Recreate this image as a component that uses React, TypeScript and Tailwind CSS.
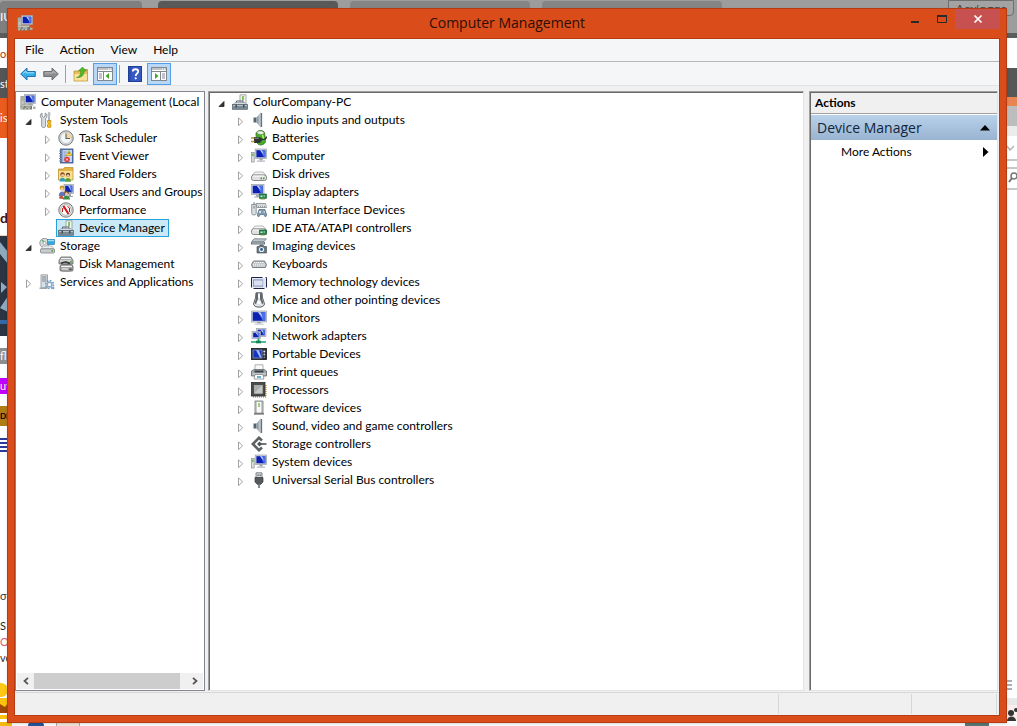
import React, { useState } from 'react';

type TreeNode = {
  id: string;
  label: string;
  icon: React.ReactNode;
  children?: TreeNode[];
  expandable?: boolean;
};

const Svg: React.FC<{ children: React.ReactNode }> = ({ children }) => (
  <svg viewBox="0 0 16 16" className="w-4 h-4 shrink-0" aria-hidden="true">{children}</svg>
);

const Screen = ({ x, y, w, h }: { x: number; y: number; w: number; h: number }) => (
  <g>
    <rect x={x} y={y} width={w} height={h} fill="#d3d7dc" stroke="#9aa0a8" strokeWidth=".7" />
    <rect x={x + 1.2} y={y + 1.2} width={w - 2.4} height={h - 2.4} fill="#0c20b4" />
    <path d={`M${x + w * 0.45} ${y + 1.2}H${x + w - 1.2}V${y + h - 1.2}H${x + w * 0.75}Z`} fill="#4a6fe6" />
    <path d={`M${x + w * 0.42} ${y + 1.2}H${x + w * 0.6}L${x + w * 0.75} ${y + h * 0.6}Z`} fill="#c6d6fb" />
  </g>
);

const ManagementIcon = () => (
  <Svg>
    <path d="M.8 2.500h3.500v9H.8z" fill="#c3c7bd" stroke="#7d8277" strokeWidth=".6" />
    <path d="M1.500 4h2M1.500 6h2" stroke="#777c70" strokeWidth=".7" />
    <Screen x={4.5} y={0.5} w={11} h={9} />
    <path d="M8.500 9.500h3v1.500h-3z" fill="#8b929b" />
    <path d="M.5 12l1.500-1.500h11L12 12z" fill="#d9dbd4" stroke="#83887d" strokeWidth=".5" />
    <rect x=".5" y="12" width="11.500" height="3.500" fill="#777d72" />
    <path d="M1 13h3M5.500 13h5M1 14.700h2M4.500 14.700h2M8 14.700h2" stroke="#e6e8df" strokeWidth=".8" />
    <path d="M13 12.500h2.500v2.500H13z" fill="#a9ada3" />
  </Svg>
);

const ToolsIcon = () => (
  <Svg>
    <path d="M2 1v3l1.600 1.300L5.200 4V1c2 1 2.400 4 .4 5.600V14c0 2-3.900 2-3.900 0V6.600C-.3 5 0 2 2 1z" transform="translate(1)" fill="#d9dce0" stroke="#777d85" strokeWidth=".8" />
    <path d="M9.300.7h1.500v3l-.5 1v4H9.700v-4l-.4-1z" fill="#eceef1" stroke="#888e95" strokeWidth=".7" />
    <path d="M8.500 8.500h3.400v2l-.7 1 .7 1V15c-.6 1-2.800 1-3.400 0v-2.500l.7-1-.7-1z" fill="#f4bb19" stroke="#a87607" strokeWidth=".6" />
  </Svg>
);

const ClockIcon = () => (
  <Svg>
    <circle cx="8" cy="8" r="7.200" fill="#dcdfe2" stroke="#777" strokeWidth="1" />
    <circle cx="8" cy="8" r="5.500" fill="#f1f6f8" stroke="#b0b5b9" strokeWidth=".6" />
    <path d="M8 2.700a5.300 5.300 0 0 1 5.200 5.800H8z" fill="#f6d79a" />
    <path d="M8 3.500V8.500h4" fill="none" stroke="#54626e" strokeWidth="1.100" />
  </Svg>
);

const EventIcon = () => (
  <Svg>
    <rect x="2.500" y="1" width="12.500" height="14" fill="#5b7fbd" stroke="#324f86" strokeWidth=".8" />
    <rect x="4.500" y="2" width="9.500" height="12" fill="#c6d7f0" />
    <path d="M5.500 4h3M5.500 6h2M5.500 8h3M5.500 10h1.500M5.500 12h2" stroke="#6782b1" strokeWidth=".8" />
    <path d="M1 3h3M1 5.500h3M1 8h3M1 10.500h3M1 13h3" stroke="#8a8f98" strokeWidth="1" />
    <path d="M11 2.500l3 5H8z" fill="#ffdb34" stroke="#a98400" strokeWidth=".5" />
    <path d="M11 4v2" stroke="#333" strokeWidth=".8" />
    <circle cx="9" cy="11.500" r="2.800" fill="#dd3535" />
    <path d="M7.900 10.400l2.200 2.200m0-2.200l-2.200 2.200" stroke="#fff" strokeWidth=".8" />
  </Svg>
);

const SharedIcon = () => (
  <Svg>
    <path d="M.5 3h5l1-1.500h8.500V14H.5z" fill="#e3b348" stroke="#b48925" strokeWidth=".7" />
    <path d="M1 5h13.500v8.500H1z" fill="#fae093" />
    <circle cx="4.500" cy="8.500" r="2.200" fill="#8e4a21" />
    <circle cx="4.700" cy="9.300" r="1.400" fill="#f2c69a" />
    <path d="M1.500 15.500c0-5 6-5 6 0z" fill="#2f9dbb" />
    <circle cx="10" cy="8.800" r="2.100" fill="#5c371c" />
    <circle cx="10" cy="9.600" r="1.400" fill="#f3c9a0" />
    <path d="M7 15.800c0-5 6-5 6 0z" fill="#5a9b38" />
  </Svg>
);

const UsersIcon = () => (
  <Svg>
    <Screen x={6} y={0.5} w={9.5} h={9} />
    <path d="M11 10h2v2h2v1h-5z" fill="#9fa5af" />
    <circle cx="4" cy="4" r="2.400" fill="#c9952a" />
    <circle cx="4" cy="5" r="1.500" fill="#f5cda4" />
    <path d="M.8 12c0-6 6.400-6 6.400 0z" fill="#6473bd" />
    <circle cx="8.500" cy="9" r="2.300" fill="#71421f" />
    <circle cx="8.500" cy="9.800" r="1.500" fill="#f4cba1" />
    <path d="M5 15.500c0-5.500 7-5.500 7 0z" fill="#398d48" />
    <path d="M1 14.500c0-4 4.500-4 4.500.5z" fill="#c2503a" />
  </Svg>
);

const PerformanceIcon = () => (
  <Svg>
    <circle cx="8" cy="8" r="7.200" fill="#e4e4e4" stroke="#777" />
    <circle cx="8" cy="8" r="5.300" fill="#fff" stroke="#999" strokeWidth=".7" />
    <path d="M4.500 10V6.500L7 5M9.500 4.500l2 1.500v4" fill="none" stroke="#b61515" strokeWidth="1" />
    <path d="M5.500 4l5 8" stroke="#d91414" strokeWidth="2" />
  </Svg>
);

const DeviceManagerIcon = () => (
  <Svg>
    <path d="M8 .8h6v9H8z" fill="#f4f5f3" stroke="#91958e" strokeWidth=".8" />
    <path d="M10.200 2h1.600v4.500h-1.600z" fill="#65b83a" />
    <path d="M4.500 9V7H11v2" fill="none" stroke="#566370" />
    <path d="M1 10.500L3 8.500h10l2 2z" fill="#d6dde2" stroke="#7f8b95" strokeWidth=".6" />
    <rect x=".5" y="10.500" width="15" height="4.800" fill="#7c8a96" stroke="#566370" strokeWidth=".7" />
    <path d="M1 11.500h14" stroke="#c3cfd7" strokeWidth=".8" />
    <path d="M3.500 10.500h1.500v3H3.500zM11 10.500h1.500v3H11z" fill="#3f4c57" />
  </Svg>
);

const StorageIcon = () => (
  <Svg>
    <circle cx="5.500" cy="5" r="4.700" fill="#d9dbdd" stroke="#84888c" strokeWidth=".8" />
    <circle cx="5.500" cy="5" r="1.500" fill="#fff" stroke="#888" strokeWidth=".6" />
    <path d="M3 2l2 2" stroke="#52b56a" strokeWidth="1.500" />
    <rect x="8.500" y="1.500" width="7" height="5" fill="#36a8db" stroke="#23769f" strokeWidth=".6" />
    <path d="M9 2.700h6" stroke="#b6eafd" />
    <path d="M2 11l2-3h9l2 3z" fill="#eceeee" stroke="#999d9f" strokeWidth=".6" />
    <rect x="1.500" y="10.800" width="14" height="4.200" rx="1" fill="#c9cccd" stroke="#7f8486" strokeWidth=".8" />
    <path d="M12.500 12h1.500v1.800h-1.500z" fill="#46aa2b" />
  </Svg>
);

const DiskMgmtIcon = () => (
  <Svg>
    <path d="M1 4.500L3 1h10l2 3.500v3.500H1z" fill="#b0b2b1" stroke="#666" strokeWidth=".8" />
    <path d="M3 2.500h10M2 5h11" stroke="#eee" strokeWidth="1" />
    <path d="M3 7.500c4-2.500 6-1.500 9 0" fill="none" stroke="#2f3131" strokeWidth="1.500" />
    <path d="M2 10l2-1.500h9L15 10v4.500c0 1-13 1-13 0z" fill="#a6a8a6" stroke="#5e6060" strokeWidth=".8" />
    <path d="M3 10.500h11M4 13h6" stroke="#f3f3f3" />
    <path d="M12 5h1.800v1.500H12z" fill="#49b32a" />
    <path d="M11.500 12.500h2V14h-2z" fill="#444" />
  </Svg>
);

const ServicesIcon = () => (
  <Svg>
    <path d="M2 .8h6.500v13H2z" fill="#dbe0e3" stroke="#8b969d" strokeWidth=".8" />
    <path d="M3 3h4.500M3 5h4.500M3 7h4.500" stroke="#768188" />
    <path d="M.5 13.500h7.500V15H.5z" fill="#9ba6ad" />
    <circle cx="10.500" cy="10.500" r="4" fill="none" stroke="#7196bb" strokeWidth="1.500" strokeDasharray="1.700 1.400" />
    <circle cx="10.500" cy="10.500" r="2.400" fill="#fff" stroke="#8dafce" strokeWidth="1.700" />
    <circle cx="14.300" cy="14" r="1.200" fill="#7ba0c2" />
  </Svg>
);

const SpeakerIcon = () => (
  <Svg>
    <path d="M2.500 5.500h3v5h-3z" fill="#56646f" />
    <path d="M5.500 5.500l4.500-5v15l-4.500-5z" fill="#8e9aa4" />
    <path d="M7.500 3.300L10 .5v15l-2.500-2.800z" fill="#b9c3ca" />
    <path d="M10.500 1v14" stroke="#66727c" strokeWidth="1.300" />
  </Svg>
);

const BatteryIcon = () => (
  <Svg>
    <path d="M6 2c1-2 6-2 7.500.5l1 8c.5 4-6 6-8 3L5 5c0-2 0-2.500 1-3z" fill="#49ad28" stroke="#2b7816" strokeWidth=".8" />
    <path d="M6 2.500c0-2 6.500-2 7 .5 0 2-6.500 2-7-.5z" fill="#eef3ea" stroke="#777" strokeWidth=".5" />
    <path d="M11.500 5l1.500 5" stroke="#b6f17c" strokeWidth="1.500" />
    <path d="M3 7h4c3 0 4 1 4 2.500S10 13 7 13H3z" fill="#2c3432" />
    <path d="M4 8.200h4" stroke="#8d9895" />
    <path d="M0 8h3.500M0 11.500h3.500" stroke="#bb9032" strokeWidth="1.300" />
    <path d="M11 9.500c3 0 4.500-1 4.500-3" fill="none" stroke="#303030" strokeWidth="1.300" />
  </Svg>
);

const ComputerIcon = () => (
  <Svg>
    <rect x=".5" y="4.500" width="2.700" height="9.500" fill="#dadddf" stroke="#8b9094" strokeWidth=".7" />
    <path d="M1.200 5.500h1.400v2.500H1.200z" fill="#4eb934" />
    <Screen x={4.2} y={1} w={11.4} h={9.5} />
    <path d="M8.500 10.500h3v2h-3z" fill="#9ca3ab" />
    <path d="M6 12.500h8v1.300H6z" fill="#b5bbc2" />
  </Svg>
);

const DriveShape = () => (
  <g>
    <path d="M1.500 9L4 6h8l2.500 3z" fill="#f4f5f5" stroke="#9b9e9f" strokeWidth=".7" />
    <rect x=".5" y="9" width="15" height="5.500" rx="2" fill="#dfe1e1" stroke="#7b7f80" strokeWidth=".9" />
    <path d="M2 10h11" stroke="#fff" />
  </g>
);

const DiskIcon = () => (
  <Svg>
    <DriveShape />
    <path d="M12 11.500h1.500v1.700H12z" fill="#34a61f" />
    <path d="M9.500 11.500h1.500v1.700H9.500z" fill="#707576" />
  </Svg>
);

const Card = () => (
  <g>
    <rect x="8.500" y="10" width="7" height="4.500" fill="#25884a" stroke="#115c2c" strokeWidth=".6" />
    <path d="M9.500 11.500h2v1.500h-2zM12.500 11.500h1.500v1h-1.500z" fill="#cfe9d5" />
    <path d="M9.500 15h4.500" stroke="#8b9a50" strokeWidth="1" />
  </g>
);

const DisplayIcon = () => (
  <Svg>
    <Screen x={0.5} y={0.5} w={12.5} h={10} />
    <path d="M5 10.500h3v2H5zM3 12.500h5v1H3z" fill="#a9afb6" />
    <Card />
  </Svg>
);

const HidIcon = () => (
  <Svg>
    <path d="M.7 2.500h4.500v9c0 2-4.500 2-4.500 0z" fill="#d8dde0" stroke="#788188" strokeWidth=".8" />
    <path d="M3 0v3M3 4v2.500" stroke="#788188" />
    <path d="M5 1.500h9.500l1 4H6z" fill="#eceeef" stroke="#70787d" strokeWidth=".7" />
    <path d="M6.500 3h8M7 4.500h7" stroke="#757d81" strokeWidth=".8" strokeDasharray="1 1" />
    <path d="M8 7.500h6l1.700 5.500-1.200 2-2-2.500h-3L7.500 15l-1.200-2z" fill="#7e9bb1" stroke="#50697c" strokeWidth=".7" />
    <path d="M8 10h2M9 9v2M12.500 10h1.500" stroke="#fff" strokeWidth=".9" />
  </Svg>
);

const IdeIcon = () => (
  <Svg>
    <DriveShape />
    <Card />
  </Svg>
);

const ImagingIcon = () => (
  <Svg>
    <path d="M3 .8h12.500L13 3.500H.8z" fill="#bac7cd" stroke="#667179" strokeWidth=".7" />
    <path d="M0 4h14v2.500H0z" fill="#68757d" />
    <path d="M1 5h12" stroke="#d0d9dd" strokeWidth=".8" />
    <path d="M6 8.500h2L9 7h3l1 1.500h2.500V15H6z" fill="#697680" stroke="#3c4850" strokeWidth=".6" />
    <circle cx="10.500" cy="11.500" r="2.600" fill="#edf2f4" />
    <circle cx="10.500" cy="11.500" r="1.400" fill="#285d91" />
  </Svg>
);

const KeyboardIcon = () => (
  <Svg>
    <path d="M2.500 5h11l2 3.500-1 3h-13l-1-3z" fill="#b6bcbf" stroke="#6d7478" strokeWidth=".9" />
    <path d="M3 6.500h10M2 8.200h12M2 10h12" stroke="#fff" strokeWidth="1" strokeDasharray="1.200 .7" />
  </Svg>
);

const MemoryIcon = () => (
  <Svg>
    <rect x=".5" y="3.500" width="15" height="11" fill="#fff" stroke="#202346" strokeDasharray="11 3" />
    <rect x="1.500" y="4.500" width="13" height="9" fill="#c4cce4" />
    <rect x="2.500" y="6" width="9.500" height="6" fill="#dae2f2" stroke="#828fb4" strokeWidth=".8" />
    <path d="M13 5v8" stroke="#fff" />
  </Svg>
);

const MouseIcon = () => (
  <Svg>
    <path d="M5 .8h6l.5 5 2 6c0 4.500-11 4.500-11 0l2-6z" fill="#dfe3e5" stroke="#4b5054" strokeWidth=".9" />
    <path d="M5 1h2v6l-2 5-1.500-.5 1.500-5zM11 1H9v6l2 5 1.500-.5-1.500-5z" fill="#60676c" />
    <path d="M7.300 2h1.500v4H7.300z" fill="#fff" />
    <circle cx="8" cy="10.500" r="1.800" fill="#fff" />
  </Svg>
);

const MonitorIcon = () => (
  <Svg>
    <Screen x={0.5} y={1} w={15} h={11} />
    <path d="M6 12h4v1.500H6z" fill="#9ca3ab" />
    <path d="M3.500 13.500h9v1.200h-9z" fill="#c4cad1" />
  </Svg>
);

const NetworkIcon = () => (
  <Svg>
    <Screen x={5.5} y={0.5} w={9.5} h={8} />
    <Screen x={1} y={3.5} w={8.5} h={7} />
    <path d="M7.500 10.500v3" stroke="#1e9b68" strokeWidth="1.800" />
    <path d="M0 14h15" stroke="#55bc91" strokeWidth="2" />
    <path d="M5 12.700h5v2.600H5z" fill="#148653" />
  </Svg>
);

const PortableIcon = () => (
  <Svg>
    <rect x=".5" y="2.500" width="15" height="11" fill="#292e37" stroke="#14171c" strokeWidth=".8" />
    <rect x="2" y="4" width="9" height="8" fill="#1431c0" stroke="#9fb1e8" strokeWidth=".6" />
    <path d="M5 4.300h3l2.500 7.400H9z" fill="#9db9fa" />
    <circle cx="13.300" cy="5.500" r="1" fill="#eee" />
    <circle cx="13.300" cy="8.500" r="1" fill="#bbb" />
    <circle cx="13.300" cy="11.300" r=".8" fill="#999" />
  </Svg>
);

const PrinterIcon = () => (
  <Svg>
    <path d="M4 .8h8v6H4z" fill="#fafafa" stroke="#8d9294" strokeWidth=".7" />
    <path d="M.5 7L3 5.500h10L15.500 7v5H.5z" fill="#a4abaf" stroke="#60676b" strokeWidth=".8" />
    <path d="M3.500 7.500h9" stroke="#393f43" strokeWidth="2" />
    <path d="M1.500 10h13" stroke="#dfe3e5" />
    <path d="M4 10.500h8l1 4.500H3z" fill="#fff" stroke="#777e83" strokeWidth=".7" />
    <path d="M6 13h4" stroke="#3c96c8" strokeWidth="1.500" />
  </Svg>
);

const ProcessorIcon = () => (
  <Svg>
    <path d="M2 15h13V2" fill="none" stroke="#cda44d" strokeWidth="1.500" strokeDasharray="1 1" />
    <rect x=".5" y=".5" width="13.500" height="13.500" fill="#4b4d4b" stroke="#2b2c2b" strokeWidth=".8" />
    <rect x="3" y="3" width="8.500" height="8.500" fill="#a9adab" />
    <path d="M3 11.500L11.500 3v8.500z" fill="#c5c8c6" />
  </Svg>
);

const SoftwareIcon = () => (
  <Svg>
    <path d="M4 1h8v12H4z" fill="#c9cccb" stroke="#737776" strokeWidth=".8" />
    <path d="M6 2h4v10.500H6z" fill="#f8f8f8" />
    <path d="M7.300 3h1.500v4H7.300z" fill="#83c250" />
    <path d="M3 13h10v1.700H3z" fill="#7c807e" />
  </Svg>
);

const StorageCtrlIcon = () => (
  <Svg>
    <path d="M11 4.500L8 1.800 1.800 8 8 14.200l3-2.700" fill="none" stroke="#5c6062" strokeWidth="2.600" />
    <path d="M9 8h6.500" stroke="#46494b" strokeWidth="1.500" />
    <path d="M8.500 5.500L11 8l-2.500 2.500L6 8z" fill="#505456" />
  </Svg>
);

const UsbIcon = () => (
  <Svg>
    <path d="M5 .8h6V6H5z" fill="#d5d7d8" stroke="#6c6f71" strokeWidth=".8" />
    <path d="M6.500 2.500h1v1.500h-1zM8.700 2.500h1v1.500h-1z" fill="#484b4d" />
    <path d="M4 5.500h8v4.500l-2.500 2.500h-3L4 10z" fill="#56595c" stroke="#393b3e" strokeWidth=".7" />
    <path d="M8 12v4" stroke="#777a7c" strokeWidth="1.800" />
  </Svg>
);

const Chevron: React.FC<{ open: boolean }> = ({ open }) => (
  <svg viewBox="0 0 9 9" className="w-[9px] h-[9px]" aria-hidden="true">
    {open ? <path d="M7 2.500V7.500H2z" fill="#333" stroke="#222" strokeWidth=".8" /> : <path d="M2.500 .8l4 4-4 4z" fill="#fff" stroke="#a2a2a2" />}
  </svg>
);

const consoleTree: TreeNode[] = [
  {
    id: 'tools', label: 'System Tools', icon: <ToolsIcon />, children: [
      { id: 'tasks', label: 'Task Scheduler', icon: <ClockIcon />, expandable: true },
      { id: 'events', label: 'Event Viewer', icon: <EventIcon />, expandable: true },
      { id: 'shared', label: 'Shared Folders', icon: <SharedIcon />, expandable: true },
      { id: 'users', label: 'Local Users and Groups', icon: <UsersIcon />, expandable: true },
      { id: 'perf', label: 'Performance', icon: <PerformanceIcon />, expandable: true },
      { id: 'devmgr', label: 'Device Manager', icon: <DeviceManagerIcon /> },
    ],
  },
  {
    id: 'storage', label: 'Storage', icon: <StorageIcon />, children: [
      { id: 'diskmgmt', label: 'Disk Management', icon: <DiskMgmtIcon /> },
    ],
  },
  { id: 'services', label: 'Services and Applications', icon: <ServicesIcon />, expandable: true },
];

const devices: [string, React.ReactNode][] = [
  ['Audio inputs and outputs', <SpeakerIcon />],
  ['Batteries', <BatteryIcon />],
  ['Computer', <ComputerIcon />],
  ['Disk drives', <DiskIcon />],
  ['Display adapters', <DisplayIcon />],
  ['Human Interface Devices', <HidIcon />],
  ['IDE ATA/ATAPI controllers', <IdeIcon />],
  ['Imaging devices', <ImagingIcon />],
  ['Keyboards', <KeyboardIcon />],
  ['Memory technology devices', <MemoryIcon />],
  ['Mice and other pointing devices', <MouseIcon />],
  ['Monitors', <MonitorIcon />],
  ['Network adapters', <NetworkIcon />],
  ['Portable Devices', <PortableIcon />],
  ['Print queues', <PrinterIcon />],
  ['Processors', <ProcessorIcon />],
  ['Software devices', <SoftwareIcon />],
  ['Sound, video and game controllers', <SpeakerIcon />],
  ['Storage controllers', <StorageCtrlIcon />],
  ['System devices', <ComputerIcon />],
  ['Universal Serial Bus controllers', <UsbIcon />],
];

const deviceTree: TreeNode[] = [
  {
    id: 'pc', label: 'ColurCompany-PC', icon: <DeviceManagerIcon />,
    children: devices.map(([label, icon]) => ({ id: label, label, icon, expandable: true })),
  },
];

interface TreeProps {
  nodes: TreeNode[];
  selected: string;
  onSelect: (id: string) => void;
}

const Tree: React.FC<TreeProps> = ({ nodes, selected, onSelect }) => {
  const [closed, setClosed] = useState<string[]>([]);
  const toggle = (id: string) =>
    setClosed(closed.includes(id) ? closed.filter(c => c !== id) : [...closed, id]);

  return (
    <ul>
      {nodes.map(node => {
        const open = !!node.children && !closed.includes(node.id);
        return (
          <li key={node.id}>
            <div className="flex h-[18px] items-center">
              <div className="flex w-[17px] shrink-0 justify-center">
                {(node.children || node.expandable) && (
                  <button type="button" aria-label={`Toggle ${node.label}`} onClick={() => toggle(node.id)} className="pt-[2px]">
                    <Chevron open={open} />
                  </button>
                )}
              </div>
              <button
                type="button"
                onClick={() => onSelect(node.id)}
                className={`flex h-[18px] items-center gap-[5px] border pr-[3px] pl-px whitespace-nowrap ${selected === node.id ? 'border-[#26a0da] bg-[#cbe8f6]' : 'border-transparent'}`}
              >
                {node.icon}
                <span>{node.label}</span>
              </button>
            </div>
            {open && node.children && (
              <div className="pl-[19px]">
                <Tree nodes={node.children} selected={selected} onSelect={onSelect} />
              </div>
            )}
          </li>
        );
      })}
    </ul>
  );
};

const PaneToggleIcon: React.FC<{ side: 'left' | 'right' }> = ({ side }) => (
  <Svg>
    <rect x=".5" y="1.500" width="15" height="13" fill="#fff" stroke="#83888f" />
    <path d="M1 3h14M1 5.500h14" stroke="#83888f" />
    <path d="M11 3h1M13 3h1" stroke="#fff" />
    {side === 'left' ? (
      <>
        <path d="M6.500 6v8M2 8h3M2 10h3M2 12h3" stroke="#83888f" />
        <path d="M12 7v6L8.500 10z" fill="#3faa2a" />
      </>
    ) : (
      <>
        <path d="M9.500 6v8M11 8h3M11 10h3M11 12h3" stroke="#83888f" />
        <path d="M4 7v6l3.500-3z" fill="#3faa2a" />
      </>
    )}
  </Svg>
);

const Toolbar = () => (
  <div className="flex h-6 shrink-0 items-center border-b border-[#e3e3e3] bg-[#f5f6f7] px-1">
    <button type="button" aria-label="Back" className="px-px">
      <Svg><path d="M.7 8L7 2v3.500h8.300v5H7V14z" fill="#37aee8" stroke="#1768a8" strokeWidth=".9" /><path d="M3 7.500L6 5v1.800h8" fill="none" stroke="#9be4ff" /></Svg>
    </button>
    <button type="button" aria-label="Forward" className="ml-[5px] px-px">
      <Svg><path d="M15.300 8L9 2v3.500H.7v5H9V14z" fill="#8e8e8e" stroke="#686868" strokeWidth=".9" /><path d="M2 7h8V5l3 2.500" fill="none" stroke="#bcbcbc" /></Svg>
    </button>
    <span className="mx-[5px] h-[18px] w-px bg-[#a0a0a0]" />
    <button type="button" aria-label="Up one level" className="px-[2px]">
      <Svg><path d="M1 5h5l1-1.500h7.500V15H1z" fill="#e7be58" stroke="#b68c2b" strokeWidth=".7" /><path d="M1.500 8h12.500v6.500H1.500z" fill="#fae29b" /><path d="M3.500 11.500C6.500 11 8 8 7.800 5H5.500L9.500 1l3.800 4H11c0 4-2 7-7.500 6.500z" fill="#4fba2c" stroke="#2b8617" strokeWidth=".5" /></Svg>
    </button>
    <button type="button" aria-label="Show or hide console tree" className="ml-[2px] border border-[#569de5] bg-[#b8d8f9] px-[3px] py-[2px]">
      <PaneToggleIcon side="left" />
    </button>
    <span className="ml-[2px] mr-[7px] h-[18px] w-px bg-[#a0a0a0]" />
    <button type="button" aria-label="Help">
      <Svg>
        <rect x="1.500" y=".5" width="13" height="15" fill="#3559c5" stroke="#213e96" />
        <path d="M3 1v14" stroke="#2440a0" />
        <path d="M5.800 5.500c0-3 5.400-3 5.400 0 0 2-2.500 2-2.500 4.500" fill="none" stroke="#fff" strokeWidth="1.800" />
        <circle cx="8.700" cy="12.300" r="1.100" fill="#fff" />
      </Svg>
    </button>
    <button type="button" aria-label="Show or hide action pane" className="ml-1 border border-[#569de5] bg-[#b8d8f9] px-[3px] py-[2px]">
      <PaneToggleIcon side="right" />
    </button>
  </div>
);

// What is left visible of the browser behind the window
const Backdrop = () => (
  <div className="flex h-full flex-col overflow-hidden bg-white" aria-hidden="true">
    <div className="flex h-[38px] shrink-0 justify-between border-b-[5px] border-[#5c5c5c] bg-[#9d9d9d]">
      <div className="flex w-3/4 items-start pt-px">
        <div className="h-8 w-[142px] rounded-t bg-[#808080] pt-2 text-xs text-white">IU</div>
        <div className="ml-4 h-8 w-[180px] rounded-t bg-[#595959]" />
        <div className="ml-3 h-8 w-[180px] rounded-t bg-[#858585]" />
        <div className="ml-3 h-8 w-[180px] rounded-t bg-[#858585]" />
      </div>
      <div className="mr-[3px] h-4 w-[66px] rounded-b border border-[#6e6e6e] bg-[#a3a3a3] text-center leading-4 text-[#444]">Αρχίασας</div>
    </div>
    <div className="flex min-h-0 grow justify-between text-[11px]">
      <div className="w-2 whitespace-nowrap">
        <div className="h-[30px] pt-2 text-[#b3341a]">or</div>
        <div className="h-[30px] bg-[#555] pt-2 text-white">st</div>
        <div className="h-10 bg-[#ea5b1e] pt-3 text-white">is</div>
        <div className="h-[98px] border-b border-[#f4cfc4] pt-[70px] text-sm font-bold text-[#401010]">d</div>
        <svg viewBox="0 0 8 100" className="block h-[100px] w-2">
          <path d="M0 0h8v100H0z" fill="#2a3442" />
          <path d="M0 6l8 10v12L0 18zM1 46l6 5-6 6zM0 72l8-12v16z" fill="#8fa9be" />
          <path d="M0 84h8v4H0z" fill="#3668a8" />
        </svg>
        <div className="mt-3 h-4 bg-[#8e8e8e] text-white">fli</div>
        <div className="mt-[14px] h-4 bg-[#bf00ff] text-white">uv</div>
        <div className="mt-3 h-5 bg-[#b07d14] text-[8px] leading-5 font-bold text-black">DE</div>
        <svg viewBox="0 0 8 16" className="mt-3 block h-4 w-2"><path d="M0 1h8M0 5h8M0 9h8M0 13h8" stroke="#2c3a9c" strokeWidth="2" /></svg>
        <div className="mt-[134px] text-[#333]">σ</div>
        <div className="mt-[14px] text-[#222]">S</div>
        <div className="text-[#e05a6d]">OM</div>
        <div className="text-[#333]">ve</div>
        <svg viewBox="0 0 8 40" className="mt-4 block h-10 w-2">
          <circle cx="1" cy="8" r="7" fill="#ffc814" />
          <path d="M0 17h8v14H0z" fill="#a04808" />
          <path d="M0 16h8v5l-3 4-5-3zM0 33h8v4H0z" fill="#ffc20e" />
        </svg>
      </div>
      <div className="w-[10px] overflow-hidden">
        <div className="h-[30px]" />
        <div className="h-[29px] bg-[#575757]" />
        <div className="h-[9px] bg-[#e98552]" />
        <div className="h-5 bg-[#bdbdbd]" />
        <div className="h-[10px] bg-[#ececec]" />
        <svg viewBox="0 0 10 54" className="block h-[54px] w-[10px]">
          <path d="M0 10l3 4 4-4M0 24h10M0 32h10M0 53h10" fill="none" stroke="#b5b5b5" strokeWidth="1.500" />
          <circle cx="7" cy="40" r="3" fill="none" stroke="#777" strokeWidth="1.500" />
          <path d="M5 42l-3 4" stroke="#777" strokeWidth="2" />
        </svg>
        <svg viewBox="0 0 10 45" className="mt-[486px] block h-[45px] w-[10px]">
          <path d="M0 5h5M0 9h5M0 13h5" stroke="#50616e" />
          <path d="M0 22h10v7H0z" fill="#e8e8e8" />
          <path d="M0 29h10v16H0z" fill="#fdeeee" />
          <circle cx="4" cy="37" r="3" fill="#333" />
          <circle cx="9" cy="34" r="2" fill="#333" />
          <path d="M0 45c0-6 9-6 9 0z" fill="#333" />
        </svg>
      </div>
    </div>
    <div className="flex h-1 shrink-0 bg-[#fafafa]">
      <div className="h-1 w-3 bg-[#f5b912]" />
      <div className="ml-4 h-1 w-4 rounded-t-full bg-[#23549d]" />
      <div className="ml-3 h-1 w-6 border-x border-[#aaa] bg-[#f1e2d6]" />
      <div className="mr-7 ml-auto h-1 w-6 bg-[#587772]" />
    </div>
  </div>
);

const App: React.FC = () => {
  const [selected, setSelected] = useState('devmgr');
  const [device, setDevice] = useState('');

  return (
    <div className="relative h-screen overflow-hidden font-['Lato','Open_Sans',sans-serif] text-[12px] leading-4 text-black">
      <Backdrop />
      <div className="absolute top-2 right-[10px] bottom-[3px] left-[7px] flex flex-col border border-[#b53c12] bg-[#da4c19] px-[6px] pb-[6px] shadow">
        <header className="grid h-[29px] shrink-0 grid-cols-[1fr_auto_1fr] items-start">
          <div className="pt-[6px] pl-[3px]"><ManagementIcon /></div>
          <h1 className="pt-1 font-['Open_Sans',sans-serif] text-[14px] leading-5 text-[#2b1008]">Computer Management</h1>
          <div className="flex justify-end">
            <button type="button" aria-label="Minimize" className="flex h-5 w-[27px] items-center justify-center">
              <svg viewBox="0 0 10 10" className="w-[10px] h-[10px]"><path d="M1 8h8" stroke="#2a2a2a" strokeWidth="2" /></svg>
            </button>
            <button type="button" aria-label="Maximize" className="flex h-5 w-[27px] items-center justify-center">
              <svg viewBox="0 0 10 10" className="w-[10px] h-[10px]"><path d="M.5 1.500h9v7h-9z" fill="none" stroke="#2a2a2a" /><path d="M0 2h10" stroke="#2a2a2a" strokeWidth="2" /></svg>
            </button>
            <button type="button" aria-label="Close" className="flex h-5 w-[45px] items-center justify-center bg-[#c75050]">
              <svg viewBox="0 0 10 10" className="w-[10px] h-[10px]"><path d="M1.500 1.500l7 7m0-7l-7 7" stroke="#fff" strokeWidth="1.700" /></svg>
            </button>
          </div>
        </header>

        <div className="flex min-h-0 grow flex-col border border-[#b53c12] bg-[#f0f0f0]">
          <nav className="flex h-[23px] shrink-0 items-center gap-4 border-b border-[#b6b9bc] bg-[#f5f6f7] px-[10px]">
            <button type="button">File</button>
            <button type="button">Action</button>
            <button type="button">View</button>
            <button type="button">Help</button>
          </nav>
          <Toolbar />

          <main className="mt-[5px] flex min-h-0 grow">
            <section className="mr-[3px] flex w-[190px] shrink-0 flex-col border border-[#828790] bg-white p-px">
              <div className="min-h-0 grow overflow-hidden">
                <button type="button" className="flex h-[18px] items-center gap-[5px] pl-[3px] whitespace-nowrap">
                  <ManagementIcon />
                  <span>Computer Management (Local</span>
                </button>
                <div className="pl-[3px]">
                  <Tree nodes={consoleTree} selected={selected} onSelect={setSelected} />
                </div>
              </div>
              <div className="flex h-4 shrink-0 bg-[#f0f0f0]">
                <button type="button" aria-label="Scroll left" className="flex w-[17px] items-center justify-center">
                  <svg viewBox="0 0 8 8" className="w-2 h-2"><path d="M6 .8L2.500 4 6 7.200" fill="none" stroke="#555" strokeWidth="1.800" /></svg>
                </button>
                <div className="mr-[6px] grow bg-[#cdcdcd]" />
                <button type="button" aria-label="Scroll right" className="flex w-[17px] items-center justify-center">
                  <svg viewBox="0 0 8 8" className="w-2 h-2"><path d="M2 .8L5.500 4 2 7.200" fill="none" stroke="#555" strokeWidth="1.800" /></svg>
                </button>
              </div>
            </section>

            <section className="mr-[5px] grow border border-t-[#a0a0a0] border-r-[#e3e3e3] border-b-[#e3e3e3] border-l-[#a0a0a0] bg-white pt-px pl-1 shadow-[inset_1px_1px_#696969]">
              <Tree nodes={deviceTree} selected={device} onSelect={setDevice} />
            </section>

            <aside className="mr-px w-[189px] shrink-0 border border-t-[#a0a0a0] border-r-[#e3e3e3] border-b-[#e3e3e3] border-l-[#a0a0a0] bg-[#696969] pt-px pl-px">
              <div className="h-full bg-white">
                <h2 className="mb-px h-[21px] border-b border-[#a0a0a0] bg-[#f0f0f0] pt-[2px] pl-1 font-bold">Actions</h2>
                <button type="button" className="flex h-[25px] w-full items-center justify-between bg-linear-to-b from-[#b9d1ea] to-[#99b4d1] pr-[7px] pl-[6px] font-['Open_Sans',sans-serif] text-[14px] text-[#12243a]">
                  Device Manager
                  <svg viewBox="0 0 10 6" className="w-[10px] h-[6px]"><path d="M5 0l5 5.500H0z" fill="#000" /></svg>
                </button>
                <button type="button" className="flex h-6 w-full items-center justify-between pr-2 pl-[30px]">
                  More Actions
                  <svg viewBox="0 0 6 10" className="w-[6px] h-[10px]"><path d="M0 0l5.500 5L0 10z" fill="#000" /></svg>
                </button>
              </div>
            </aside>
          </main>

          <footer className="mt-px flex h-[23px] shrink-0 justify-end border-t border-[#d7d7d7] py-px">
            <div className="w-[133px] border-l border-[#d7d7d7]" />
            <div className="w-[85px] border-l border-[#d7d7d7]" />
            <div className="w-[3px] border-l border-[#d7d7d7]" />
          </footer>
        </div>
      </div>
    </div>
  );
};

export default App;
